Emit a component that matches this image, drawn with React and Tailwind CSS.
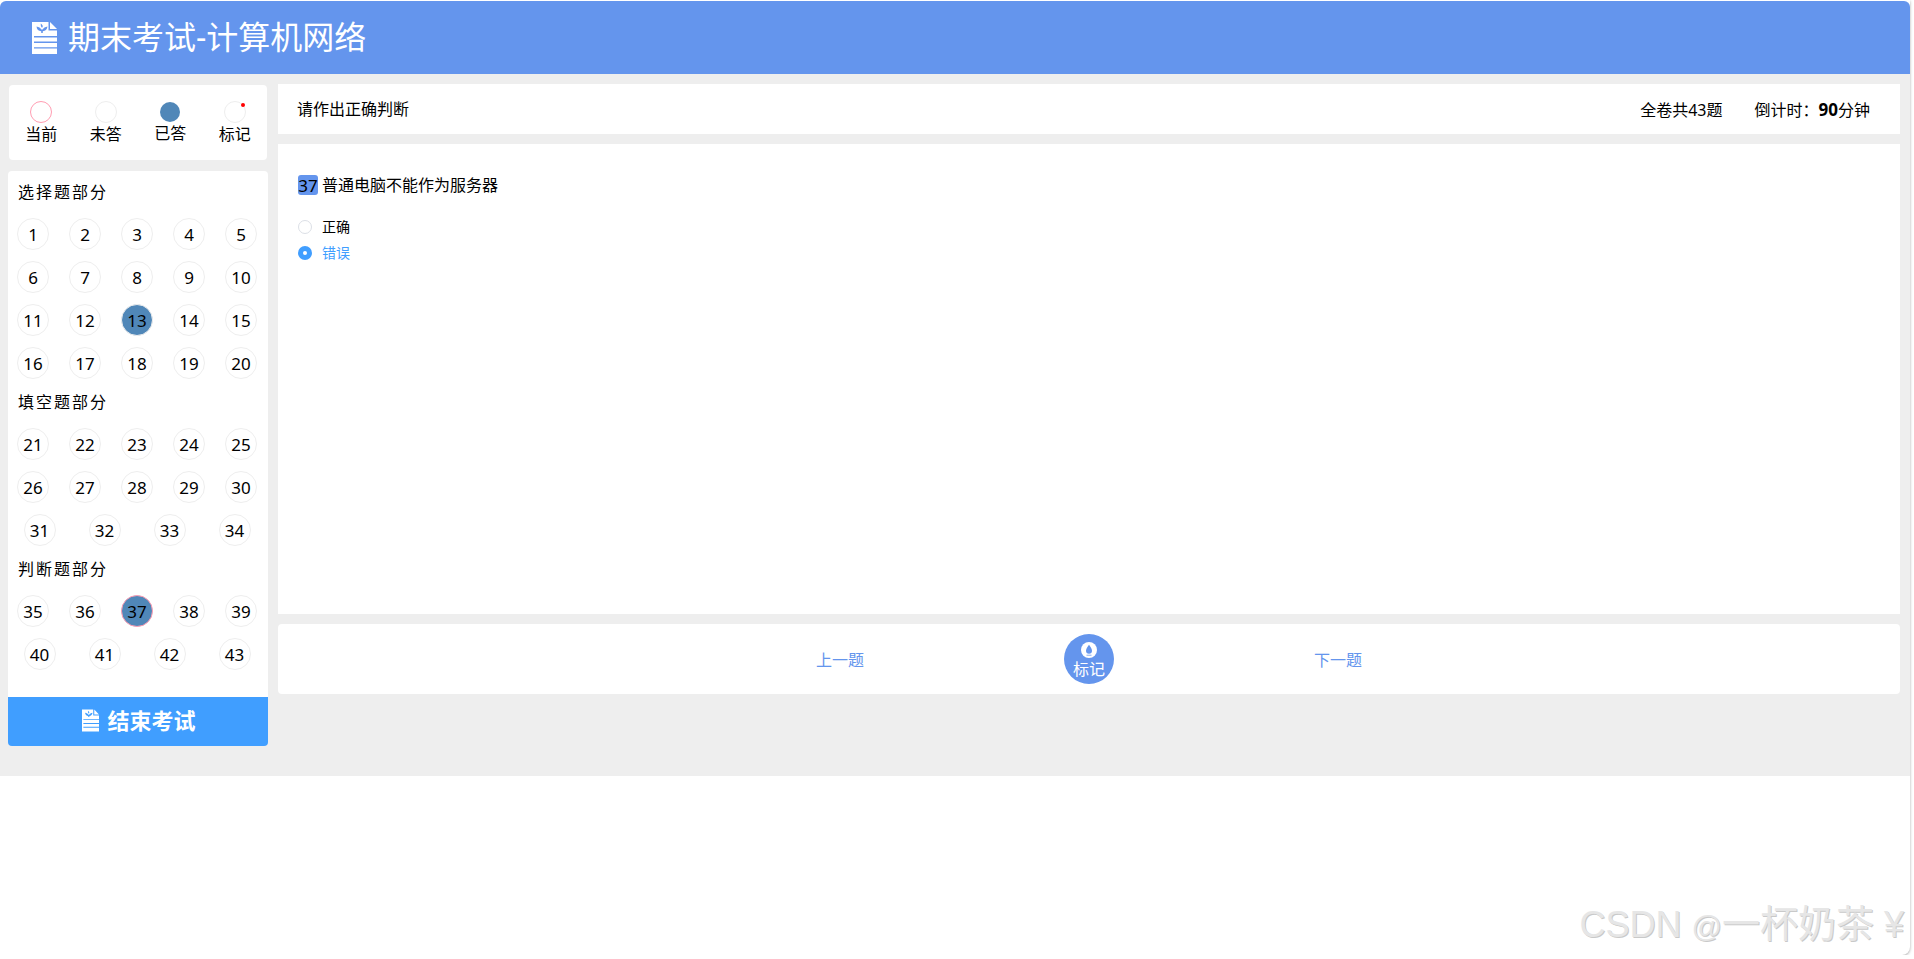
import React from 'react';

const circle = 'w-[32px] h-[32px] rounded-full border border-[#eeeeee] flex items-center justify-center pt-[1px] text-[17px] leading-none text-black';

const groups = [
    {title: '选择题部分', rows: [[1, 2, 3, 4, 5], [6, 7, 8, 9, 10], [11, 12, 13, 14, 15], [16, 17, 18, 19, 20]]},
    {title: '填空题部分', rows: [[21, 22, 23, 24, 25], [26, 27, 28, 29, 30], [31, 32, 33, 34]]},
    {title: '判断题部分', rows: [[35, 36, 37, 38, 39], [40, 41, 42, 43]]},
];

// the document icon used in the header and on the finish button
function DocIcon({className}) {
    return (
        <svg viewBox="0 0 25 32" className={className}>
            <path d="M0 0H16.5V8.5H25V32H0Z" fill="#fff"/>
            <path d="M18 0L25 7H18Z" fill="#fff"/>
            <path d="M2 14H25V15.4H2ZM2 19.6H25V21H2ZM2 25.2H25V26.6H2Z" fill="currentColor"/>
            <path d="M8.8 1.5C8.6 3.5 9 5 10 5.8C11 5 11.4 3.5 8.8 1.5ZM4.5 4.5C4.8 7.5 6.5 9 9.2 9.2V11H10.8V9.2C13.5 9 15 7.5 15.5 4.5C13.2 4.8 11.4 6 10.6 7.6H9.4C8.6 6 6.8 4.8 4.5 4.5Z" fill="currentColor"/>
        </svg>
    );
}

function Legend() {
    return (
        <div className="mx-[1px] h-[75px] bg-white rounded-[4px] flex justify-around pt-[16px]">
            <div className="w-[32px] flex flex-col items-center">
                <div className="w-[22px] h-[22px] rounded-full border border-[#ff9db2]"/>
                <span className="text-[16px] leading-[24px] -mt-[1px] whitespace-nowrap">当前</span>
            </div>
            <div className="w-[32px] flex flex-col items-center">
                <div className="w-[22px] h-[22px] rounded-full border border-[#eeeeee]"/>
                <span className="text-[16px] leading-[24px] -mt-[1px] whitespace-nowrap">未答</span>
            </div>
            <div className="w-[32px] flex flex-col items-center">
                <div className="w-[20px] h-[20px] mt-[1px] rounded-full bg-[#5087b8]"/>
                <span className="text-[16px] leading-[24px] -mt-[1px] whitespace-nowrap">已答</span>
            </div>
            <div className="w-[32px] flex flex-col items-center">
                <div className="relative w-[22px] h-[22px] rounded-full border border-[#eeeeee]">
                    <div className="absolute top-[1px] right-[0px] w-[4px] h-[4px] rounded-full bg-[#ff0000]"/>
                </div>
                <span className="text-[16px] leading-[24px] -mt-[1px] whitespace-nowrap">标记</span>
            </div>
        </div>
    );
}

function NumberCircle({n}) {
    if (n === 13) return <div className={circle + ' bg-[#5087b8] border-[#5087b8]'}>{n}</div>;
    if (n === 37) return <div className={circle + ' bg-[#5087b8] border-[#ff9db2]'}>{n}</div>;
    return <div className={circle}>{n}</div>;
}

function QuestionNav() {
    return (
        <div className="bg-white rounded-t-[4px] pb-[27px]">
            {groups.map((g, i) => (
                <div key={g.title}>
                    <div className={i === 0 ? 'h-[47px] pb-[5px] pl-[10px] flex items-center text-[16px] tracking-[2px]' : 'h-[49px] pb-[3px] pl-[10px] flex items-center text-[16px] tracking-[2px]'}>
                        {g.title}
                    </div>
                    <div className="flex flex-col gap-[11px]">
                        {g.rows.map((row) => (
                            <div key={row[0]} className="flex justify-around -ml-[1px] mr-[1px]">
                                {row.map((n) => <NumberCircle key={n} n={n}/>)}
                            </div>
                        ))}
                    </div>
                </div>
            ))}
        </div>
    );
}

export default function App() {
    return (
        <div className="relative w-[1910px] h-[955px] bg-white rounded-tl-[6px] rounded-br-[8px] shadow-[0_1px_3px_rgba(0,0,0,0.35)] font-['Noto_Sans','Noto_Sans_CJK_SC',sans-serif] text-black">
            <header className="h-[74px] pt-[1px] bg-white">
                <div className="h-[73px] bg-[#6495ed] rounded-t-[6px] flex items-center pl-[32px]">
                    <DocIcon className="w-[25px] h-[32px] text-[#6495ed]"/>
                    <span className="ml-[11px] -mt-[2px] text-[32px] leading-[40px] text-white whitespace-nowrap">期末考试-计算机网络</span>
                </div>
            </header>

            <main className="h-[702px] bg-[#eeeeee] flex">
                <aside className="w-[260px] ml-[8px] pt-[11px] shrink-0">
                    <Legend/>
                    <div className="mt-[11px]">
                        <QuestionNav/>
                    </div>
                    <button className="w-full h-[49px] pb-[3px] pl-[2px] bg-[#409eff] rounded-b-[4px] flex items-center justify-center text-white text-[22px] font-bold leading-none">
                        <DocIcon className="w-[17px] h-[23px] text-[#409eff]"/>
                        <span className="ml-[8px]">结束考试</span>
                    </button>
                </aside>

                <section className="w-[1622px] ml-[10px] pt-[10px] shrink-0 flex flex-col gap-[10px]">
                    <div className="h-[50px] bg-white pl-[20px] pr-[30px] flex items-center justify-between text-[16px] leading-none">
                        <span className="-ml-[1px]">请作出正确判断</span>
                        <div className="flex items-baseline gap-[32px]">
                            <span>全卷共43题</span>
                            <span>倒计时：<b className="text-[17px]">90</b>分钟</span>
                        </div>
                    </div>

                    <div className="h-[470px] bg-white pl-[20px] pt-[31px]">
                        <div className="flex items-center h-[20px] text-[16px] leading-none">
                            <span className="w-[20px] h-[20px] bg-[#6495ed] rounded-[3px] flex items-center justify-center text-[17px]">37</span>
                            <span className="ml-[4px]">普通电脑不能作为服务器</span>
                        </div>
                        <div className="mt-[25px] flex items-center h-[14px] text-[14px] leading-none">
                            <span className="w-[14px] h-[14px] rounded-full border border-[#dcdfe6]"/>
                            <span className="ml-[10px]">正确</span>
                        </div>
                        <div className="mt-[12px] flex items-center h-[14px] text-[14px] leading-none text-[#409eff]">
                            <span className="w-[14px] h-[14px] rounded-full bg-[#409eff] flex items-center justify-center">
                                <span className="w-[4px] h-[4px] rounded-full bg-white"/>
                            </span>
                            <span className="ml-[10px]">错误</span>
                        </div>
                    </div>

                    <div className="h-[70px] bg-white rounded-[4px] flex items-center justify-center gap-[200px] text-[16px] leading-none">
                        <span className="pt-[2px] text-[#6495ed] whitespace-nowrap">上一题</span>
                        <div className="w-[50px] h-[50px] rounded-full bg-[#6495ed] flex flex-col items-center justify-center text-white">
                            <svg viewBox="0 0 16 16" className="w-[16px] h-[16px]">
                                <circle cx="8" cy="8" r="8" fill="#fff"/>
                                <path d="M8 2.8C9.8 5.4 11 6.9 11 8.8A3 3 0 0 1 5 8.8C5 6.9 6.2 5.4 8 2.8Z" fill="#6495ed"/>
                                <path d="M5.5 13.2H10.5" stroke="#6495ed" strokeWidth="0.8"/>
                            </svg>
                            <span className="mt-[4px] leading-[14px]">标记</span>
                        </div>
                        <span className="pt-[2px] text-[#6495ed] whitespace-nowrap">下一题</span>
                    </div>
                </section>
            </main>

            {/* watermark stamped over the capture */}
            <div className="absolute right-[6px] bottom-[6px] text-[36px] leading-[44px] whitespace-nowrap text-[#e6e6e6] font-['Liberation_Sans','Noto_Sans_CJK_SC',sans-serif] [text-shadow:1px_1px_0_#c9c9c9]">
                CSDN <span className="text-[30px]">@</span><span className="text-[38px]">一杯奶茶</span> ¥
            </div>
        </div>
    );
}
